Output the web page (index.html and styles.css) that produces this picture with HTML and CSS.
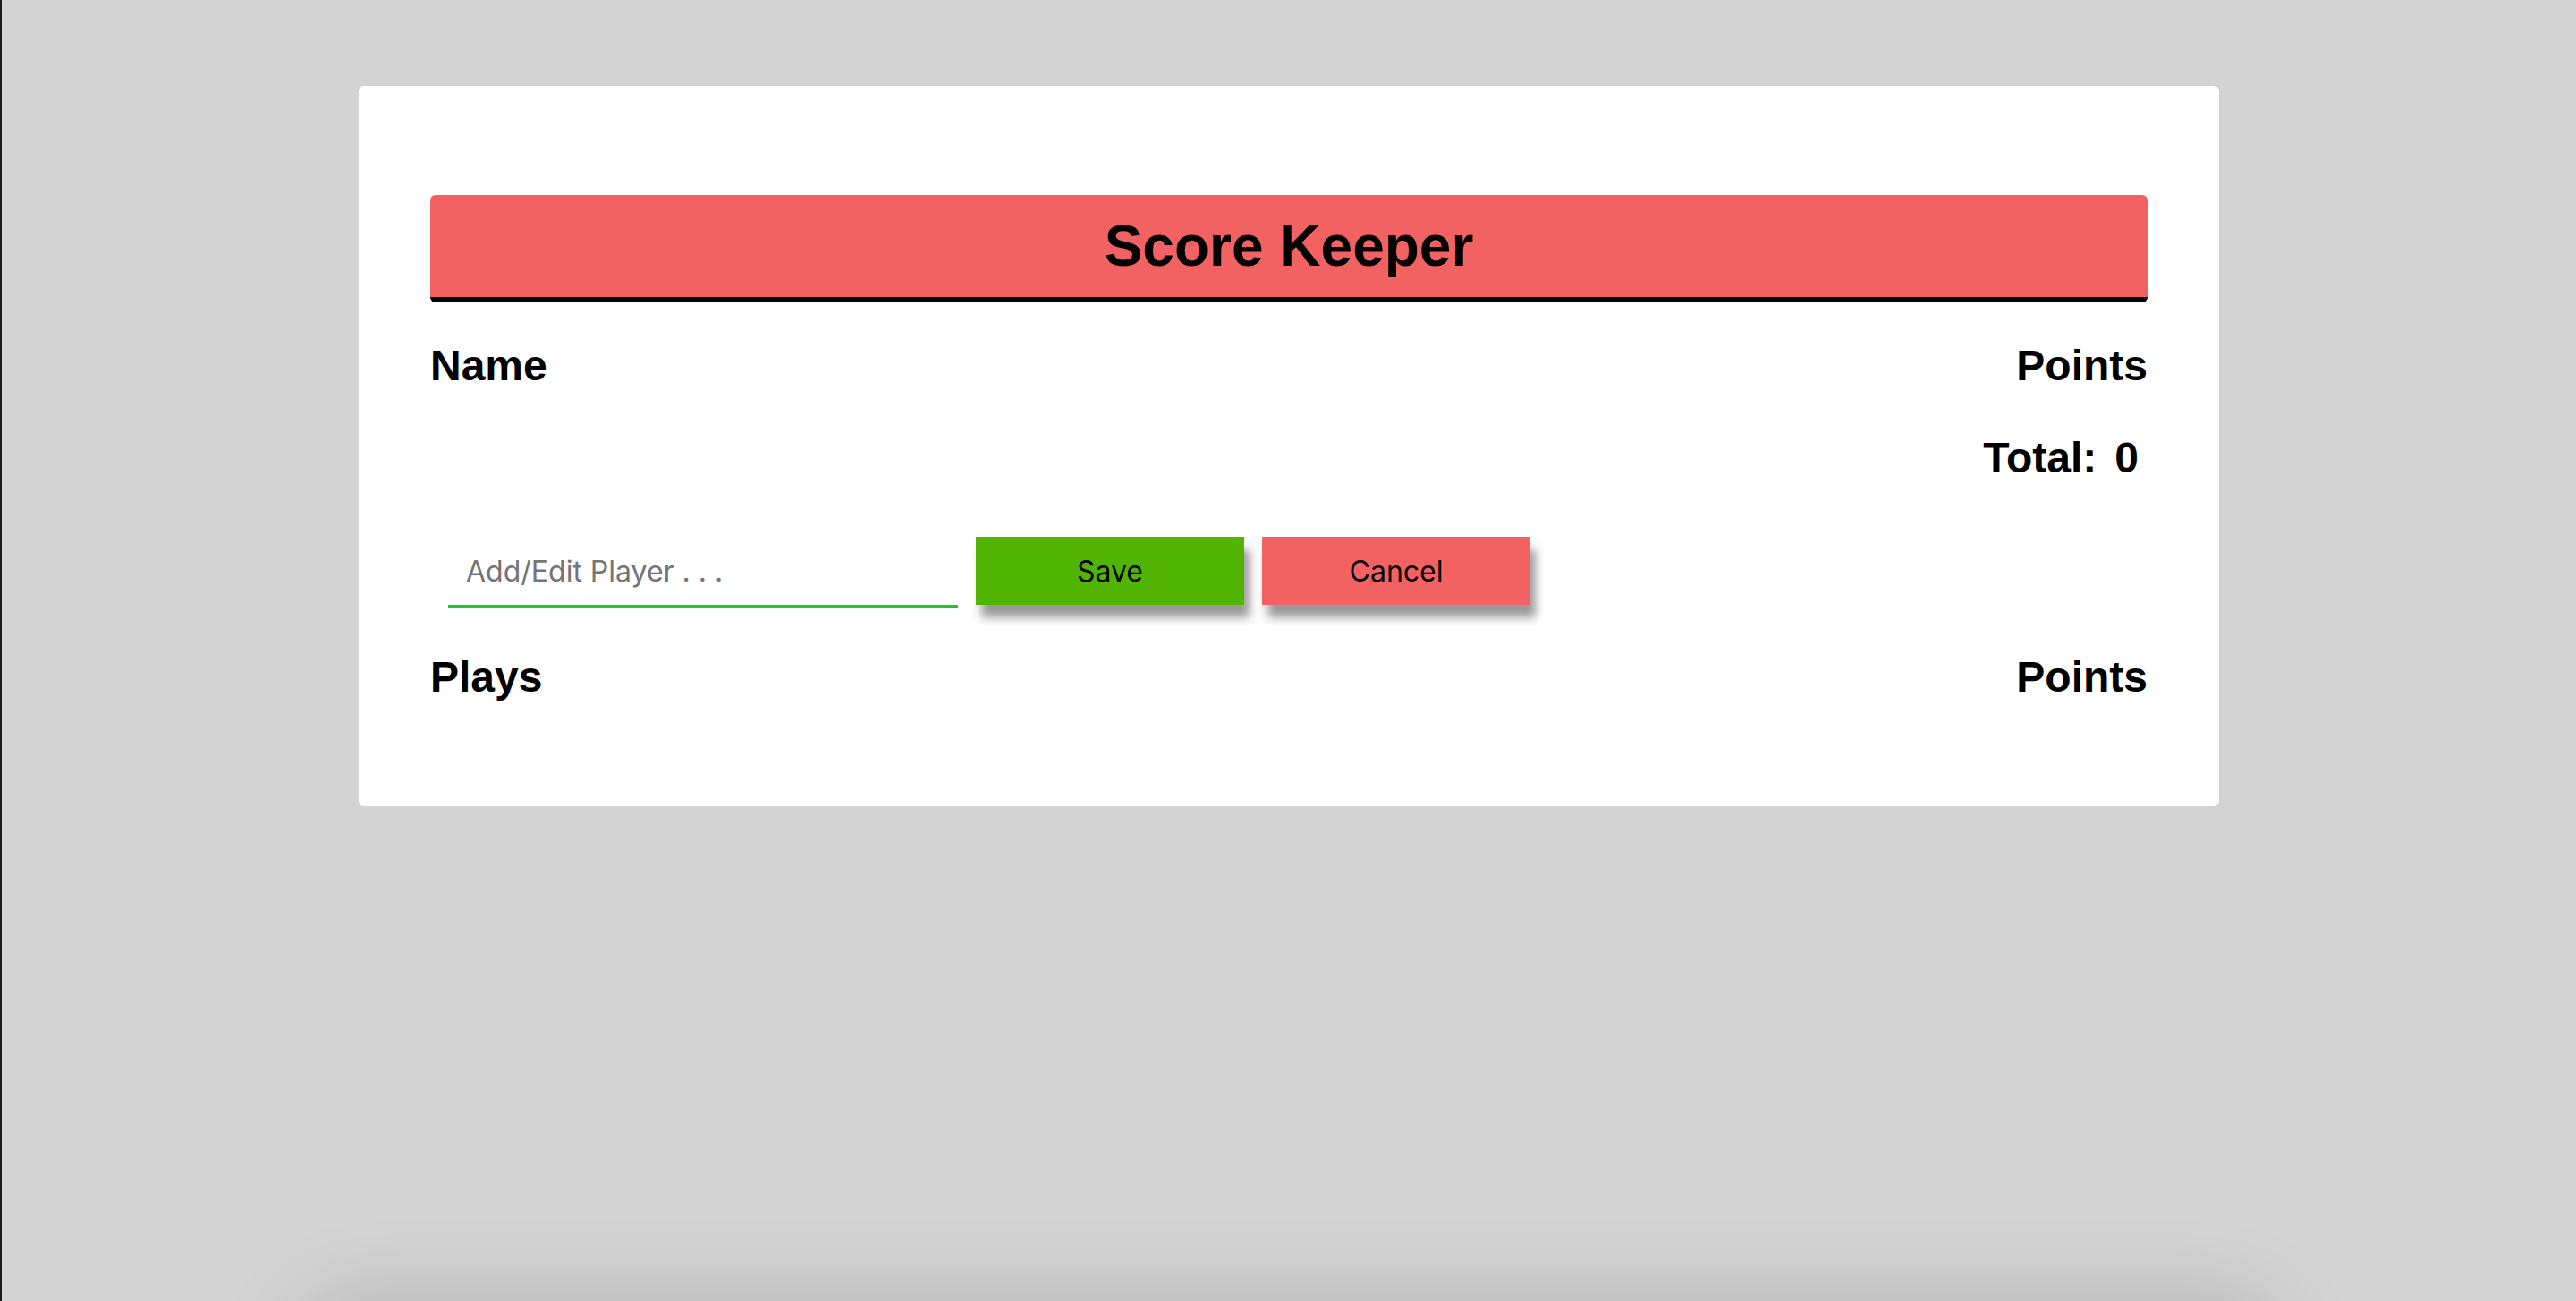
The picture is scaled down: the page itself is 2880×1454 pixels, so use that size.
FILE: index.html
```html
<!DOCTYPE html>
<html lang="en">
<head>
<meta charset="utf-8">
<title>Score Keeper</title>
<link rel="stylesheet" href="styles.css">
</head>
<body>
<div class="page">
  <main class="card">
    <header class="title-bar">
      <h1 class="title">Score Keeper</h1>
    </header>
    <div class="row head-row">
      <span>Name</span>
      <span>Points</span>
    </div>
    <div class="total-row">
      <span>Total:</span>
      <span>0</span>
    </div>
    <form class="player-form">
      <input class="player-input" type="text" placeholder="Add/Edit Player . . .">
      <button type="button" class="btn btn-save">Save</button>
      <button type="button" class="btn btn-cancel">Cancel</button>
    </form>
    <div class="row head-row plays-row">
      <span>Plays</span>
      <span>Points</span>
    </div>
  </main>
  <section class="next-card"></section>
</div>
</body>
</html>
```
FILE: styles.css
```css
html, body {
  margin: 0;
  padding: 0;
}
body {
  background: #d3d3d3;
  border-left: 2px solid #1c1c1c;
  font-family: "Liberation Sans", Arial, sans-serif;
  color: #000;
}
.page {
  height: 1454px;
  overflow: hidden;
  padding-top: 96px;
  box-sizing: border-box;
}
.card {
  width: 2080px;
  margin: 0 auto;
  background: #fff;
  border-radius: 6px;
  padding: 122px 80px 116px 80px;
  box-sizing: border-box;
}
.title-bar {
  background: #f26262;
  height: 120px;
  border-bottom: 6px solid #000;
  border-radius: 6px;
  box-sizing: border-box;
  display: flex;
  align-items: center;
  justify-content: center;
}
.title {
  margin: 0;
  font-size: 64px;
  line-height: 1;
  font-weight: 700;
}
.row {
  display: flex;
  justify-content: space-between;
}
.head-row {
  font-size: 48px;
  font-weight: 700;
  line-height: 56px;
  margin-top: 43px;
}
.total-row {
  display: flex;
  justify-content: flex-end;
  gap: 20px;
  padding-right: 10px;
  font-size: 48px;
  font-weight: 700;
  line-height: 56px;
  margin-top: 47px;
}
.player-form {
  display: flex;
  align-items: flex-start;
  gap: 20px;
  padding-left: 20px;
  margin-top: 60px;
}
.player-input {
  width: 570px;
  height: 80px;
  box-sizing: border-box;
  border: none;
  border-bottom: 4px solid #22c722;
  padding: 0 20px;
  font-family: Inter, "Liberation Sans", sans-serif;
  font-size: 32px;
  outline: none;
  background: transparent;
}
.player-input::placeholder {
  color: #757575;
}
.btn {
  width: 300px;
  height: 76px;
  border: none;
  border-radius: 0;
  font-family: Inter, "Liberation Sans", sans-serif;
  font-size: 32px;
  color: #000;
  box-shadow: 6px 14px 10px rgba(0, 0, 0, 0.4);
  cursor: pointer;
}
.btn-save {
  background: #50b400;
}
.btn-cancel {
  background: #f26262;
}
.plays-row {
  margin-top: 49px;
}
.next-card {
  width: 2180px;
  height: 400px;
  margin: 568px auto 0;
  background: #d3d3d3;
  box-shadow: 0 0 100px rgba(0, 0, 0, 0.2);
}
```
